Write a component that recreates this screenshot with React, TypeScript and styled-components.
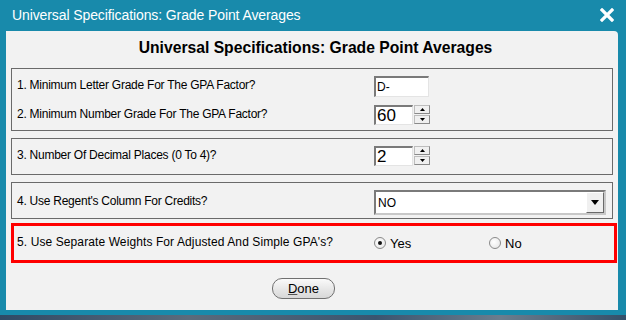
import React, { useState } from "react";
import styled, { createGlobalStyle } from "styled-components";

const GlobalStyle = createGlobalStyle`
  html, body {
    margin: 0;
    padding: 0;
    background: #188aab;
    overflow: hidden;
  }
  * {
    box-sizing: border-box;
  }
`;

const Window = styled.div`
  width: 626px;
  height: 315px;
  background: #188aab;
  display: flex;
  flex-direction: column;
`;

const TitleBar = styled.div`
  height: 31px;
  display: flex;
  align-items: center;
  justify-content: space-between;
  padding: 0 10px 1px 12px;
`;

const TitleText = styled.span`
  color: #ffffff;
  font-family: "Liberation Sans", Arial, sans-serif;
  font-size: 14px;
  letter-spacing: -0.1px;
`;

const CloseButton = styled.button`
  width: 18px;
  height: 18px;
  padding: 0;
  border: none;
  background: transparent;
  display: flex;
  align-items: center;
  justify-content: center;
  cursor: pointer;
`;

const Panel = styled.div`
  flex: 1;
  margin: 0 8px 5px 6px;
  background: #f2f2f2;
  border-radius: 0 4px 0 0;
  display: flex;
  flex-direction: column;
  font-family: "Liberation Sans", Arial, sans-serif;
  font-size: 12px;
  color: #000;
`;

const Heading = styled.h1`
  margin: 0;
  height: 37px;
  display: flex;
  align-items: center;
  justify-content: center;
  padding: 0 0 3px 7px;
  font-size: 15.7px;
  font-weight: bold;
  font-family: "Liberation Sans", Arial, sans-serif;
`;

const Group = styled.div<{ $highlight?: boolean }>`
  margin: 0 ${(p) => (p.$highlight ? "1px" : "5px")} 0 5px;
  border: ${(p) => (p.$highlight ? "3px solid #ff0000" : "1px solid #6a6a6a")};
  padding: ${(p) => (p.$highlight ? "0 0 0 3px" : "7px 0 0 5px")};
  display: flex;
  flex-direction: column;
  gap: 8px;
`;

const Row = styled.div<{ $h: number; $pb?: number }>`
  display: grid;
  grid-template-columns: 357px auto;
  align-items: center;
  height: ${(p) => p.$h}px;
  margin-bottom: ${(p) => p.$pb ?? 0}px;
`;

const Label = styled.span<{ $loose?: boolean }>`
  padding-bottom: 3px;
  white-space: nowrap;
  letter-spacing: ${(p) => (p.$loose ? "0.1px" : "-0.25px")};
`;

const TextBox = styled.div<{ $w: number; $h: number; $big?: boolean }>`
  width: ${(p) => p.$w}px;
  height: ${(p) => p.$h}px;
  background: #fff;
  border-top: 2px solid #7a7a7a;
  border-left: 2px solid #7a7a7a;
  border-bottom: 1px solid #e4e4e4;
  border-right: 1px solid #e4e4e4;
  padding-left: 1px;
  display: flex;
  align-items: center;
  font-size: ${(p) => (p.$big ? "17px" : "12px")};
  line-height: 1;
`;

const Spinner = styled.div`
  display: flex;
  align-items: center;
  gap: 1px;
`;

const SpinButtons = styled.div`
  display: flex;
  flex-direction: column;
  gap: 1px;
  height: 20px;
`;

const SpinButton = styled.div`
  width: 16px;
  height: 9px;
  background: #f0f0f0;
  border: 1px solid #bdbdbd;
  border-bottom-color: #8a8a8a;
  border-right-color: #8a8a8a;
  display: flex;
  align-items: center;
  justify-content: center;
`;

const SelectBox = styled.div`
  width: 232px;
  height: 25px;
  background: #fff;
  border-top: 2px solid #7a7a7a;
  border-left: 2px solid #7a7a7a;
  border-bottom: 2px solid #c8c8c8;
  border-right: 2px solid #c8c8c8;
  display: flex;
  align-items: center;
  justify-content: space-between;
  padding-left: 2px;
  font-size: 12px;
`;

const DropButton = styled.div`
  width: 18px;
  height: 21px;
  background: #f0f0f0;
  border: 1px solid #ffffff;
  border-right-color: #6a6a6a;
  border-bottom-color: #6a6a6a;
  display: flex;
  align-items: center;
  justify-content: center;
`;

const RadioGroup = styled.div`
  display: flex;
  align-items: center;
  font-size: 13px;
`;

const RadioOption = styled.label<{ $w: number }>`
  width: ${(p) => p.$w}px;
  display: flex;
  align-items: center;
  gap: 4px;
  cursor: pointer;
`;

const RadioCircle = styled.span<{ $on: boolean }>`
  width: 12px;
  height: 12px;
  border-radius: 50%;
  border: 1px solid #8a8a8a;
  background: radial-gradient(circle at 40% 40%, #ffffff, #e2e2e2);
  display: flex;
  align-items: center;
  justify-content: center;
  &::after {
    content: "";
    width: 4px;
    height: 4px;
    border-radius: 50%;
    background: ${(p) => (p.$on ? "#111" : "transparent")};
  }
`;

const Footer = styled.div`
  flex: 1;
  display: flex;
  justify-content: center;
  padding: 15px 17px 0 0;
`;

const DoneButton = styled.button`
  width: 63px;
  height: 21px;
  border-radius: 10px;
  border: 1px solid #707070;
  background: linear-gradient(#fafafa, #e8e8e8 50%, #d8d8d8);
  font-family: "Liberation Sans", Arial, sans-serif;
  font-size: 13px;
  color: #000;
  padding: 0;
  cursor: pointer;
  u {
    text-decoration-color: #555;
  }
`;

const Desktop = styled.div`
  height: 5px;
  background: linear-gradient(90deg, #2f4a66, #5a6b7c 30%, #3a5570 60%, #6b7d8e 80%, #34506a);
`;

const Triangle = ({ up }: { up?: boolean }) => (
  <svg width="5" height="3" viewBox="0 0 5 3">
    <path d={up ? "M2.5 0 L5 3 L0 3 Z" : "M0 0 L5 0 L2.5 3 Z"} fill="#000" />
  </svg>
);

const App: React.FC = () => {
  const [separate, setSeparate] = useState(true);

  return (
    <>
      <GlobalStyle />
      <Window>
        <TitleBar>
          <TitleText>Universal Specifications: Grade Point Averages</TitleText>
          <CloseButton aria-label="Close">
            <svg width="14" height="14" viewBox="0 0 14 14">
              <path
                d="M2 2 L12 12 M12 2 L2 12"
                stroke="#fff"
                strokeWidth="3.2"
                strokeLinecap="square"
              />
            </svg>
          </CloseButton>
        </TitleBar>
        <Panel>
          <Heading>Universal Specifications: Grade Point Averages</Heading>

          <Group>
            <Row $h={21}>
              <Label>1. Minimum Letter Grade For The GPA Factor?</Label>
              <TextBox $w={55} $h={21}>D-</TextBox>
            </Row>
            <Row $h={20} $pb={5}>
              <Label>2. Minimum Number Grade For The GPA Factor?</Label>
              <Spinner>
                <TextBox $w={39} $h={20} $big>60</TextBox>
                <SpinButtons>
                  <SpinButton><Triangle up /></SpinButton>
                  <SpinButton><Triangle /></SpinButton>
                </SpinButtons>
              </Spinner>
            </Row>
          </Group>

          <Group style={{ marginTop: 7 }}>
            <Row $h={20} $pb={8}>
              <Label>3. Number Of Decimal Places (0 To 4)?</Label>
              <Spinner>
                <TextBox $w={39} $h={20} $big>2</TextBox>
                <SpinButtons>
                  <SpinButton><Triangle up /></SpinButton>
                  <SpinButton><Triangle /></SpinButton>
                </SpinButtons>
              </Spinner>
            </Row>
          </Group>

          <Group style={{ marginTop: 7 }}>
            <Row $h={25} $pb={3}>
              <Label>4. Use Regent's Column For Credits?</Label>
              <SelectBox>
                NO
                <DropButton>
                  <svg width="8" height="5" viewBox="0 0 8 5">
                    <path d="M0 0 L8 0 L4 5 Z" fill="#000" />
                  </svg>
                </DropButton>
              </SelectBox>
            </Row>
          </Group>

          <Group $highlight style={{ marginTop: 4 }}>
            <Row $h={34}>
              <Label $loose>5. Use Separate Weights For Adjusted And Simple GPA's?</Label>
              <RadioGroup>
                <RadioOption $w={115} onClick={() => setSeparate(true)}>
                  <RadioCircle $on={separate} />
                  Yes
                </RadioOption>
                <RadioOption $w={60} onClick={() => setSeparate(false)}>
                  <RadioCircle $on={!separate} />
                  No
                </RadioOption>
              </RadioGroup>
            </Row>
          </Group>

          <Footer>
            <DoneButton>
              <u>D</u>one
            </DoneButton>
          </Footer>
        </Panel>
      </Window>
      <Desktop />
    </>
  );
};

export default App;
